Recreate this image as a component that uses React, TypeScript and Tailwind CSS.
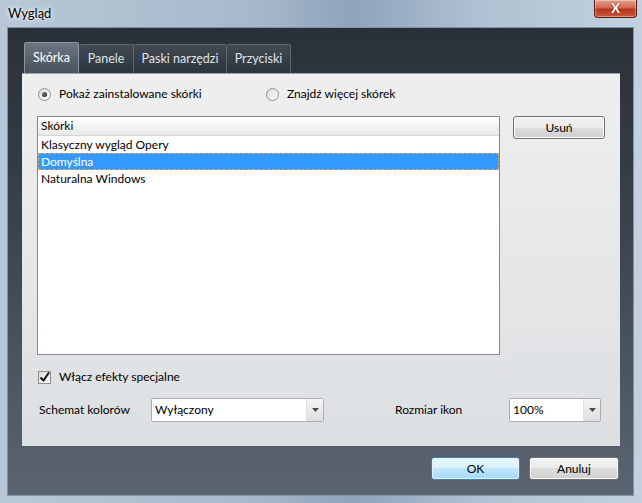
import React from "react";

const font = "font-['Segoe_UI','Lato','Noto_Sans',sans-serif]";

function Radio({ checked }: { checked?: boolean }) {
  return (
    <span className="relative inline-flex h-[13px] w-[13px] items-center justify-center rounded-full border border-[#8f8f8f] bg-[linear-gradient(135deg,#dcdcdc,#fbfbfb)]">
      {checked && (
        <span className="h-[5px] w-[5px] rounded-full bg-[radial-gradient(circle_at_35%_35%,#7a7a7a,#111)]" />
      )}
    </span>
  );
}

function Btn({ children, w, def }: { children: React.ReactNode; w: string; def?: boolean }) {
  return (
    <div
      className={`${w} flex h-[23px] items-center justify-center rounded-[3px] border text-[12px] text-black ${
        def
          ? "border-[#3c7fb1] bg-[linear-gradient(#eaf6fd_0%,#d9f0fc_50%,#bee6fd_50%,#a7d9f5_100%)] shadow-[inset_0_0_0_1px_#e3f4fc]"
          : "border-[#707070] bg-[linear-gradient(#f2f2f2_0%,#ebebeb_50%,#dddddd_50%,#cfcfcf_100%)] shadow-[inset_0_0_0_1px_#fcfcfc]"
      }`}
    >
      {children}
    </div>
  );
}

function Combo({ value, w }: { value: string; w: string }) {
  return (
    <div className={`${w} flex h-[24px] rounded-[2px] border border-[#abadb3] bg-white`}>
      <div className="flex flex-1 items-center pl-[3px] text-[12px] text-black">{value}</div>
      <div className="flex w-[17px] items-center justify-center border-l border-[#e0e0e0] bg-[linear-gradient(#f6f6f6,#dedede)]">
        <svg width="7" height="4" viewBox="0 0 7 4">
          <path d="M0 0h7L3.5 4z" fill="#4d4d4d" />
        </svg>
      </div>
    </div>
  );
}

export default function App() {
  return (
    <div className={`${font} relative h-[503px] w-[642px] overflow-hidden bg-[linear-gradient(90deg,#b8c8d8_0%,#a6b8cb_40%,#8ea4bb_55%,#b0c1d3_75%,#c3d1df_100%)]`}>
      {/* Title bar */}
      <div className="flex h-[27px] items-center pl-[8px]">
        <span className="text-[13px] text-black [text-shadow:0_0_6px_#fff,0_0_3px_#fff]">Wygląd</span>
      </div>
      <div className="absolute right-[5px] top-0 flex h-[18px] w-[43px] items-center justify-center rounded-b-[4px] border border-t-0 border-[#5b1d12] bg-[linear-gradient(#e6a08f_0%,#d26a53_45%,#b8341b_55%,#c9573c_100%)] shadow-[inset_0_0_0_1px_rgba(255,255,255,0.35)]">
        <span className="text-[13px] font-bold leading-none text-white [text-shadow:0_0_2px_#5b1d12]">X</span>
      </div>

      {/* Inner dark client area */}
      <div className="ml-[7px] flex h-[469px] w-[627px] flex-col border border-[#7e93a8] bg-[linear-gradient(#2a3038_0%,#343c45_30%,#4a545f_70%,#5a6571_100%)] pl-[14px] pr-[13px] pt-[14px]">
        {/* Tabs */}
        <div className="flex h-[31px] items-end pl-[2px]">
          <div className="flex h-[31px] w-[55px] items-center justify-center rounded-t-[2px] border border-b-0 border-[#8a96a2] bg-[linear-gradient(#6b7682,#48525c)] text-[12.5px] text-white">
            Skórka
          </div>
          <div className="flex h-[29px] w-[55px] items-center justify-center rounded-t-[2px] border border-b-0 border-l-0 border-[#5d6873] bg-[linear-gradient(#414a54,#2c333b)] text-[12.5px] text-[#dfe3e7]">
            Panele
          </div>
          <div className="flex h-[29px] w-[93px] items-center justify-center rounded-t-[2px] border border-b-0 border-l-0 border-[#5d6873] bg-[linear-gradient(#414a54,#2c333b)] text-[12.5px] text-[#dfe3e7]">
            Paski narzędzi
          </div>
          <div className="flex h-[29px] w-[64px] items-center justify-center rounded-t-[2px] border border-b-0 border-l-0 border-[#5d6873] bg-[linear-gradient(#414a54,#2c333b)] text-[12.5px] text-[#dfe3e7]">
            Przyciski
          </div>
        </div>

        {/* Panel */}
        <div className="flex h-[373px] w-[598px] flex-col border-t border-[#9aa4ae] bg-[linear-gradient(#efefef,#dcdfe2)] pl-[15px] pt-[12px] text-[12px] text-black">
          <div className="flex h-[16px] items-center">
            <div className="flex w-[229px] items-center gap-[8px] pl-[1px]">
              <Radio checked />
              <span>Pokaż zainstalowane skórki</span>
            </div>
            <div className="flex items-center gap-[8px]">
              <Radio />
              <span>Znajdź więcej skórek</span>
            </div>
          </div>

          <div className="mt-[14px] flex">
            <div className="flex h-[239px] w-[463px] flex-col border border-[#828790] bg-white">
              <div className="flex h-[19px] items-center border-b border-[#d5d5d5] bg-[linear-gradient(#ffffff,#f3f3f3_50%,#e8e8e8)] pl-[3px]">
                Skórki
              </div>
              <div className="flex h-[17px] items-center pl-[3px]">Klasyczny wygląd Opery</div>
              <div className="flex h-[17px] items-center border border-dashed border-[#d9a561] bg-[#3399ff] pl-[2px] text-white">
                Domyślna
              </div>
              <div className="flex h-[17px] items-center pl-[3px]">Naturalna Windows</div>
            </div>
            <div className="ml-[13px]">
              <Btn w="w-[92px]">Usuń</Btn>
            </div>
          </div>

          <div className="mt-[15px] flex h-[14px] items-center gap-[8px] pl-[1px]">
            <span className="flex h-[13px] w-[13px] items-center justify-center border border-[#8f8f8f] bg-[linear-gradient(135deg,#dcdcdc,#fbfbfb)]">
              <svg width="11" height="11" viewBox="0 0 11 11">
                <path d="M1.5 5.5l3 3 5.5-8" fill="none" stroke="#111" strokeWidth="2" />
              </svg>
            </span>
            <span>Włącz efekty specjalne</span>
          </div>

          <div className="mt-[14px] flex items-center">
            <span className="w-[114px] pl-[2px]">Schemat kolorów</span>
            <Combo value="Wyłączony" w="w-[173px]" />
            <span className="ml-[71px] w-[114px]">Rozmiar ikon</span>
            <Combo value="100%" w="w-[92px]" />
          </div>
        </div>

        {/* Bottom buttons */}
        <div className="mt-[11px] flex justify-end gap-[9px] pr-[1px]">
          <Btn w="w-[89px]" def>
            OK
          </Btn>
          <Btn w="w-[90px]">Anuluj</Btn>
        </div>
      </div>
    </div>
  );
}
